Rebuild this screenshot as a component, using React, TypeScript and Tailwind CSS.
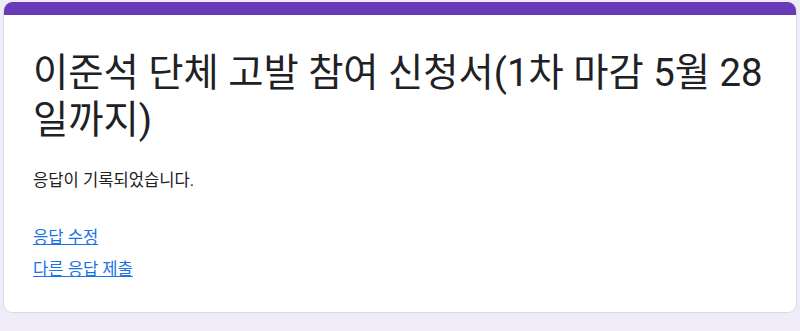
import React from "react";

export default function App() {
  return (
    <div className="min-h-screen bg-[#f0ebf8] px-[3px] pt-[2px] font-['Roboto','Noto_Sans_CJK_KR',sans-serif]">
      <div className="overflow-hidden rounded-[9px] border border-t-0 border-[#dadce0] bg-white">
        <div className="h-[13px] bg-[#673ab7]" />
        <div className="px-[29px] pt-[34px] pb-[30px]">
          <h1 className="text-[38.3px] leading-[47px] font-normal text-[#202124]">
            이준석 단체 고발 참여 신청서(1차 마감 5월 28일까지)
          </h1>
          <p className="mt-[26px] text-[16.6px] leading-[24px] text-[#202124]">
            응답이 기록되었습니다.
          </p>
          <div className="mt-[33px] flex flex-col gap-[8px]">
            <a href="#" className="self-start text-[16.6px] leading-[24px] text-[#1a73e8] underline">
              응답 수정
            </a>
            <a href="#" className="self-start text-[16.6px] leading-[24px] text-[#1a73e8] underline">
              다른 응답 제출
            </a>
          </div>
        </div>
      </div>
    </div>
  );
}
